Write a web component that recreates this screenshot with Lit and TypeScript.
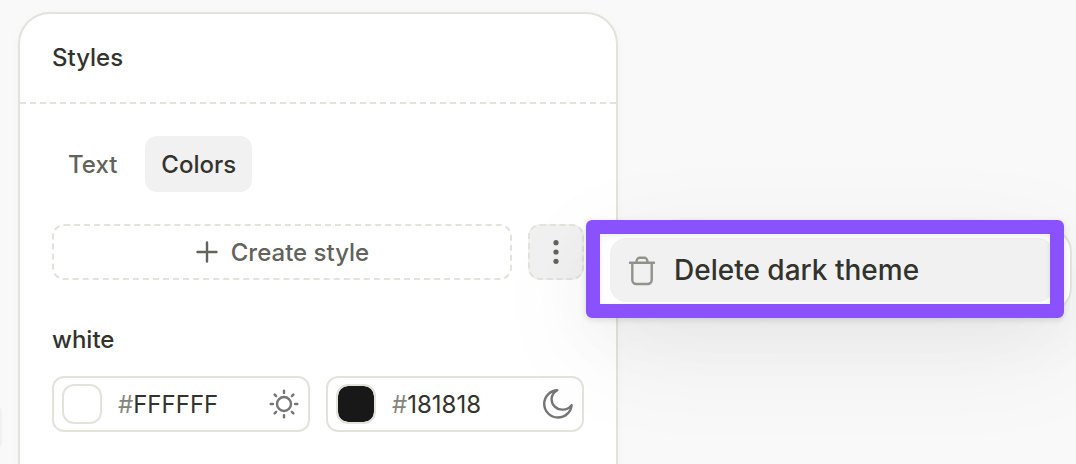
import { LitElement, html, css, svg } from "lit";
import { customElement, property, state } from "lit/decorators.js";
import { classMap } from "lit/directives/class-map.js";
import { styleMap } from "lit/directives/style-map.js";

const sunIcon = html`<svg class="icon" viewBox="0 0 30 30" width="30" height="30" aria-hidden="true">
  <circle cx="15" cy="15" r="7" />
  ${[0, 45, 90, 135, 180, 225, 270, 315].map(
    (angle) => svg`<path d="M15 1.700v2.200" transform="rotate(${angle} 15 15)" />`
  )}
</svg>`;

const moonIcon = html`<svg class="icon" viewBox="0 0 30 30" width="30" height="30" aria-hidden="true">
  <path d="M14.3 1.2C7.2 1.3 1.2 7.5 1.2 14.8c0 7.6 6.2 13.7 13.7 13.7 7 0 13-5.3 13.7-12.2-2.4 3-5.7 4.5-9.2 4.300C13 20.400 8.400 15.600 8.600 9.800 8.700 6.300 10.900 3 14.300 1.200z" />
</svg>`;

@customElement("color-field")
export class ColorField extends LitElement {
  @property() value = "FFFFFF";
  @property() theme: "light" | "dark" = "light";

  static styles = css`
    :host {
      display: block;
      min-width: 0;
    }
    .field {
      display: flex;
      align-items: center;
      box-sizing: border-box;
      height: 56px;
      padding: 0 9px 0 8px;
      border: 2px solid #e3e3dc;
      border-radius: 12px;
      background: #fff;
    }
    .swatch {
      box-sizing: border-box;
      flex: none;
      width: 40px;
      height: 40px;
      margin-right: 16px;
      border: 2px solid #e3e3dc;
      border-radius: 12px;
      background-clip: padding-box;
    }
    .hash {
      padding-top: 2px;
      color: #84857c;
    }
    .value {
      flex: 1;
      min-width: 0;
      width: 0;
      padding: 2px 0 0;
      border: 0;
      outline: 0;
      background: none;
      color: #32332d;
      font: inherit;
    }
    .icon {
      flex: none;
      fill: none;
      stroke: #757575;
      stroke-width: 2.4;
      stroke-linecap: round;
      stroke-linejoin: round;
    }
  `;

  render() {
    return html`<label class="field">
      <span class="swatch" style=${styleMap({ backgroundColor: `#${this.value}` })}></span>
      <span class="hash">#</span>
      <input
        class="value"
        aria-label="${this.theme} theme color"
        .value=${this.value}
        @change=${(e: Event) => (this.value = (e.target as HTMLInputElement).value)}
      />
      ${this.theme === "light" ? sunIcon : moonIcon}
    </label>`;
  }
}

@customElement("app-root")
export class AppRoot extends LitElement {
  @state() private tab = "Colors";

  static styles = css`
    :host {
      display: block;
      position: relative;
      box-sizing: border-box;
      min-height: 100vh;
      padding: 12px 18px 0;
      overflow: hidden;
      background: #f9f9f9;
      color: #32332d;
      font: 400 24px/32px Inter, sans-serif;
    }
    .neighbor {
      position: absolute;
      left: -38px;
      top: 404px;
      width: 40px;
      height: 46px;
      border-radius: 8px;
      background: #f1f1f1;
    }
    .panel {
      box-sizing: border-box;
      max-width: 600px;
      min-height: calc(100vh + 40px);
      margin-bottom: -52px;
      border: 2px solid #e3e3dc;
      border-radius: 32px;
      background: #fff;
      box-shadow: 0 2px 8px rgba(0, 0, 0, 0.03);
    }
    .header {
      padding: 28px 32px;
      border-bottom: 2px dashed #e3e3dc;
    }
    h2,
    h3 {
      margin: 0;
      font: inherit;
      font-weight: 500;
    }
    .body {
      display: flex;
      flex-direction: column;
      gap: 32px;
      padding: 32px;
    }
    .tabs {
      display: flex;
      gap: 12px;
    }
    button {
      box-sizing: border-box;
      margin: 0;
      border: 0;
      background: none;
      font: inherit;
      font-weight: 500;
      color: #62635b;
      cursor: pointer;
    }
    .tab {
      height: 56px;
      padding: 2px 16px 0;
      border-radius: 12px;
    }
    .tab.active {
      background: #f1f1f1;
      color: #32332d;
    }
    .toolbar {
      position: relative;
      display: flex;
      gap: 16px;
    }
    .create {
      display: flex;
      flex: 1;
      align-items: center;
      justify-content: center;
      gap: 12px;
      height: 56px;
      border: 2px dashed #e3e3dc;
      border-radius: 12px;
    }
    .create-label {
      padding-top: 2px;
    }
    .more {
      display: grid;
      place-items: center;
      width: 56px;
      height: 56px;
      padding: 0;
      border: 2px dashed #e3e3dc;
      border-radius: 12px;
      background: #f1f1f1;
    }
    .menu {
      position: absolute;
      z-index: 1;
      top: 4px;
      left: calc(100% + 4px);
      box-sizing: border-box;
      width: 484px;
      padding: 8px 16px 8px 20px;
      border: 2px solid #e3e3dc;
      border-radius: 24px;
      background: #fff;
      box-shadow: 0 32px 120px rgba(0, 0, 0, 0.07), 0 24px 64px rgba(0, 0, 0, 0.04);
    }
    .menu-item {
      display: flex;
      align-items: center;
      gap: 18px;
      width: 100%;
      height: 64px;
      padding: 0 18px;
      border-radius: 16px;
      background: #f1f1f1;
      color: #32332d;
      font-size: 28px;
    }
    .highlight {
      position: absolute;
      z-index: 2;
      top: -4px;
      left: calc(100% + 2px);
      box-sizing: border-box;
      width: 478px;
      height: 98px;
      border: 14px solid #8a52ff;
      border-radius: 6px;
      box-shadow: 0 2px 6px rgba(0, 0, 0, 0.12), inset 0 2px 6px rgba(0, 0, 0, 0.08);
      pointer-events: none;
    }
    .style {
      display: flex;
      flex-direction: column;
      gap: 20px;
      padding-top: 12px;
    }
    .colors {
      display: grid;
      grid-template-columns: 1fr 1fr;
      gap: 16px;
    }
    svg {
      display: block;
      fill: none;
      stroke: #62635b;
      stroke-width: 2.4;
      stroke-linecap: round;
      stroke-linejoin: round;
    }
    .dots {
      fill: #62635b;
      stroke: none;
    }
    .trash {
      stroke: #91928a;
    }
  `;

  render() {
    return html`
      <div class="neighbor"></div>
      <section class="panel">
        <header class="header"><h2>Styles</h2></header>
        <div class="body">
          <div class="tabs" role="tablist">
            ${["Text", "Colors"].map(
              (name) => html`<button
                class=${classMap({ tab: true, active: this.tab === name })}
                role="tab"
                aria-selected=${this.tab === name}
                @click=${() => (this.tab = name)}
              >${name}</button>`
            )}
          </div>
          <div class="toolbar">
            <button class="create">
              <svg viewBox="0 0 24 24" width="24" height="24" aria-hidden="true">
                <path d="M12 2.500v19M2.500 12h19" />
              </svg>
              <span class="create-label">Create style</span>
            </button>
            <button class="more" aria-label="More options">
              <svg class="dots" viewBox="0 0 6 24" width="6" height="24" aria-hidden="true">
                <circle cx="3" cy="2.7" r="2.6" />
                <circle cx="3" cy="12" r="2.6" />
                <circle cx="3" cy="21.3" r="2.6" />
              </svg>
            </button>
            <div class="menu" role="menu">
              <button class="menu-item" role="menuitem">
                <svg class="trash" viewBox="0 0 28 32" width="28" height="32" aria-hidden="true">
                  <path d="M2 8.700h24M4.300 8.700v17.300a4 4 0 0 0 4 4h11.400a4 4 0 0 0 4-4V8.700M8.600 8.500V7a3.200 3.200 0 0 1 3.200-3.200h4.400a3.200 3.200 0 0 1 3.200 3.200v1.500" />
                </svg>
                Delete dark theme
              </button>
            </div>
            <div class="highlight"></div>
          </div>
          <div class="style">
            <h3>white</h3>
            <div class="colors">
              <color-field value="FFFFFF" theme="light"></color-field>
              <color-field value="181818" theme="dark"></color-field>
            </div>
          </div>
        </div>
      </section>
    `;
  }
}
